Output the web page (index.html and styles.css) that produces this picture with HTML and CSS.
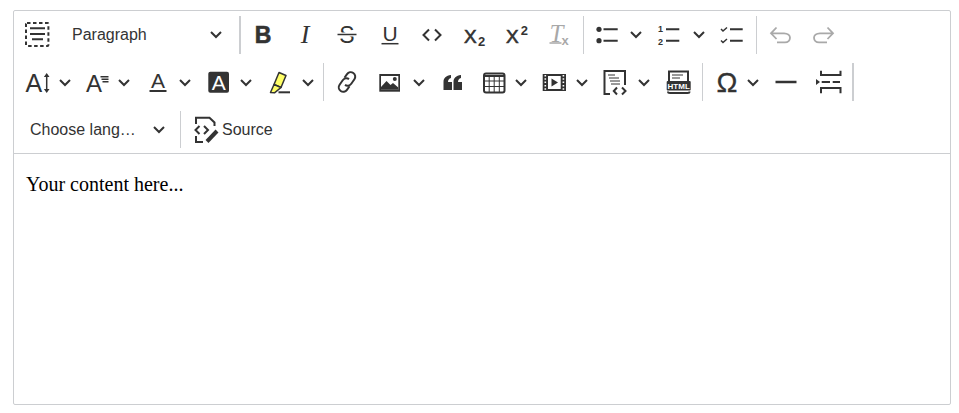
FILE: index.html
```html
<!DOCTYPE html>
<html lang="en">
<head>
<meta charset="utf-8">
<title>Editor</title>
<link rel="stylesheet" href="styles.css">
</head>
<body>
<div class="editor">
  <div class="toolbar">
    <div class="row">
      <svg class="ic g7" viewBox="0 0 32 32"><rect class="dash" x="5" y="4" width="22.4" height="23" rx="1"/><path class="ln" d="M9 9.300H24M9 15H24M11 20.300H22"/></svg>
      <div class="select para g19"><span>Paragraph</span><svg class="chev" viewBox="0 0 12 8"><path d="M1 1L6 6L11 1"/></svg></div>
      <i class="sep wide g17"></i>
      <svg class="ic g6" viewBox="0 0 32 32"><text class="sans bold mid fs23 heavy" x="16" y="24">B</text></svg>
      <svg class="ic g10" viewBox="0 0 32 32"><text class="serif ital mid fs26" x="16" y="24.300">I</text></svg>
      <svg class="ic g10" viewBox="0 0 32 32"><text class="sans mid fs23" x="16" y="24.400">S</text><path class="white-ln" d="M6.500 15.500H25.500"/><path class="thin" d="M6.500 15.500H25.500"/></svg>
      <svg class="ic g11" viewBox="0 0 32 32"><text class="sans mid fs21" x="16" y="21.500">U</text><path class="thin" d="M7.500 24.700H24.500"/></svg>
      <svg class="ic g10" viewBox="0 0 32 32"><path class="ln" d="M13 10.500L7.500 16L13 21.500M19 10.500L24.500 16L19 21.500"/></svg>
      <svg class="ic g10" viewBox="0 0 32 32"><text class="sans fs19 heavy" x="6" y="23.700">X</text><text class="sans bold fs13" x="20" y="27">2</text></svg>
      <svg class="ic g10" viewBox="0 0 32 32"><text class="sans fs19 heavy" x="6" y="23.700">X</text><text class="sans bold fs13" x="20.700" y="16">2</text></svg>
      <svg class="ic g10 off" viewBox="0 0 32 32"><text class="serif ital fs25" x="7.500" y="22.700">T</text><text class="sans bold fs13" x="19.500" y="25.500">x</text><path class="thin" d="M7.500 24H19.500"/></svg>
      <i class="sep g9"></i>
      <svg class="ic g7" viewBox="0 0 32 32"><circle class="dot" cx="8" cy="10.300" r="2.600"/><circle class="dot" cx="8" cy="21.700" r="2.600"/><path class="ln" d="M12.500 10.300H26.700M12.500 21.700H26.700"/></svg>
      <svg class="chev g7" viewBox="0 0 12 8"><path d="M1 1L6 6L11 1"/></svg>
      <svg class="ic g10" viewBox="0 0 32 32"><text class="sans bold fs9" x="6" y="13">1</text><text class="sans bold fs9" x="6" y="25.500">2</text><path class="ln" d="M14 10.300H27.300M14 21.700H27.300"/></svg>
      <svg class="chev g9" viewBox="0 0 12 8"><path d="M1 1L6 6L11 1"/></svg>
      <svg class="ic g10" viewBox="0 0 32 32"><path class="thin" d="M6 10L8 12L12 8.500M6 21.500L8 23.500L12 20"/><path class="ln" d="M15 10.300H27.700M15 21.700H27.700"/></svg>
      <i class="sep g9"></i>
      <svg class="ic g8 off" viewBox="0 0 32 32"><path class="thick-soft" d="M11.500 8.500L6 14.300L11.500 20M6 14.300H19C23 14.300 25 16.500 25 18.800C25 21.300 23 23.300 20 23.300H12"/></svg>
      <svg class="ic g10 off" viewBox="0 0 32 32"><path class="thick-soft" d="M20.500 8.500L26 14.300L20.500 20M26 14.300H13C9 14.300 7 16.500 7 18.800C7 21.300 9 23.300 12 23.300H20"/></svg>
    </div>
    <div class="row second">
      <svg class="ic g8" viewBox="0 0 32 32"><text class="sans fs25" x="3.500" y="25.700">A</text><path class="thin" d="M24.700 9V25"/><path class="fill" d="M24.700 7L27.500 11H21.900ZM24.700 27L27.500 23H21.900Z"/></svg>
      <svg class="chev g5" viewBox="0 0 12 8"><path d="M1 1L6 6L11 1"/></svg>
      <svg class="ic g10" viewBox="0 0 32 32"><text class="sans fs24" x="5" y="25.700">A</text><path class="thin" d="M19.500 10.700H27.500M20.500 13.200H27.500M21.500 15.700H27.500"/></svg>
      <svg class="chev g5" viewBox="0 0 12 8"><path d="M1 1L6 6L11 1"/></svg>
      <svg class="ic g12" viewBox="0 0 32 32"><text class="sans mid fs21" x="16" y="21.700">A</text><path class="ln" d="M7.500 25H24.500"/></svg>
      <svg class="chev g5" viewBox="0 0 12 8"><path d="M1 1L6 6L11 1"/></svg>
      <svg class="ic g12" viewBox="0 0 32 32"><rect class="fill" x="5.300" y="5.700" width="20.700" height="21" rx="2"/><text class="sans mid fs21 inv" x="15.700" y="23.500">A</text></svg>
      <svg class="chev g5" viewBox="0 0 12 8"><path d="M1 1L6 6L11 1"/></svg>
      <svg class="ic g11" viewBox="0 0 32 32"><path class="mark" d="M16 6.500L23 9.500L18 21.500L11 18.500Z"/><path class="mark" d="M11 18.500L7.500 26.500L11.500 26.800L18 21.500Z"/><path class="ln" d="M15.500 26.300H27"/></svg>
      <svg class="chev g7" viewBox="0 0 12 8"><path d="M1 1L6 6L11 1"/></svg>
      <i class="sep g9"></i>
      <svg class="ic g7" viewBox="0 0 32 32"><g transform="rotate(-55 16 16)"><path class="ln" d="M14 20.500H9.500A4.500 4.500 0 0 1 9.500 11.500H15A4.500 4.500 0 0 1 19.500 16"/><path class="ln" d="M18 11.500H22.500A4.500 4.500 0 0 1 22.500 20.500H17A4.500 4.500 0 0 1 12.500 16"/></g></svg>
      <svg class="ic g11" viewBox="0 0 32 32"><rect class="fill" x="5.300" y="8" width="20.700" height="17.700"/><rect class="white" x="7" y="10" width="17.300" height="13.700"/><path class="fill" d="M7 23.700V21L12.500 15L16.500 19L19 17L24.300 21.500V23.700Z"/><circle class="fill" cx="20.800" cy="13" r="2"/></svg>
      <svg class="chev g7" viewBox="0 0 12 8"><path d="M1 1L6 6L11 1"/></svg>
      <svg class="ic g12" viewBox="0 0 32 32"><path class="fill" d="M6.500 24V16C6.500 12 9 9.500 14 9V12C12 12.500 11 14 11 16H15V24ZM16.500 24V16C16.500 12 19 9.500 24 9V12C22 12.500 21 14 21 16H25V24Z"/></svg>
      <svg class="ic g9" viewBox="0 0 32 32"><rect class="ln" x="6" y="7.500" width="20.500" height="19" rx="2"/><path class="ln" d="M6 10H26.500"/><path class="hair" d="M6 15H26.500M6 20.500H26.500M11.200 10V26M16.200 10V26M21.300 10V26"/></svg>
      <svg class="chev g5" viewBox="0 0 12 8"><path d="M1 1L6 6L11 1"/></svg>
      <svg class="ic g11" viewBox="0 0 32 32"><rect class="fill" x="4.700" y="8" width="23.300" height="17"/><rect class="white" x="10" y="10" width="12.700" height="13"/><path class="fill" d="M13.500 12.500V20.500L20 16.500Z"/><path class="holes" d="M7.300 9V24.500M25.400 9V24.500"/></svg>
      <svg class="chev g6" viewBox="0 0 12 8"><path d="M1 1L6 6L11 1"/></svg>
      <svg class="ic g12" viewBox="0 0 32 32"><path class="ln" d="M10 28H4.500V5H25V19"/><path class="hair" d="M8 9H15M9 12H19M10 15H20M11 18H20"/><path class="ln" d="M17 21.500L13.800 25L17 28.500M22 21.500L25.500 25L22 28.500"/></svg>
      <svg class="chev g6" viewBox="0 0 12 8"><path d="M1 1L6 6L11 1"/></svg>
      <svg class="ic g13" viewBox="0 0 32 32"><path class="ln" d="M6 16V5.500H25V16"/><path class="hair" d="M9 9H20M9 12H17"/><rect class="fill" x="3.700" y="15" width="24" height="9.500" rx="1"/><text class="sans bold mid fs8 inv" x="15.700" y="22.700">HTML</text><path class="ln" d="M5 25.500C5 26.800 6 27 7 27H24.500C25.500 27 26.500 26.800 26.500 25.500"/></svg>
      <i class="sep g7"></i>
      <svg class="ic g8" viewBox="0 0 32 32"><text class="sans mid fs28 heavy-s" x="16" y="25.700">Ω</text></svg>
      <svg class="chev g4" viewBox="0 0 12 8"><path d="M1 1L6 6L11 1"/></svg>
      <svg class="ic g11" viewBox="0 0 32 32"><path class="mid-ln" d="M5.500 16H26.500"/></svg>
      <svg class="ic g11" viewBox="0 0 32 32"><path class="ln" d="M8 4.700V9H27.500V4.700M8 27.300V22H27.500V27.300"/><path class="fill" d="M3 13L7 16L3 19Z"/><path class="ln" d="M8.700 16H17M19.700 16H27"/></svg>
      <i class="sep wide g7"></i>
    </div>
    <div class="row third">
      <div class="select lang g16"><span>Choose lang…</span><svg class="chev" viewBox="0 0 12 8"><path d="M1 1L6 6L11 1"/></svg></div>
      <i class="sep g15"></i>
      <svg class="ic g9" viewBox="0 0 32 32"><path class="ln" d="M6 10V3.800H19.500L24.500 8.500V12M6 22V28H13"/><path class="ln" d="M9.500 12L5.500 16L9.500 20M14 12L18 16L14 20"/><path class="pen" d="M27 17L17 27.500"/></svg>
      <span class="label">Source</span>
    </div>
  </div>
  <div class="content">Your content here...</div>
</div>
</body>
</html>
```
FILE: styles.css
```css
* { box-sizing: border-box; }
html, body { margin: 0; padding: 0; background: #fff; }
body { padding: 10px 8px 8px 13px; }

.editor {
  width: 938px;
  height: 395px;
  border: 1px solid #ccced1;
  border-radius: 2px;
  display: flex;
  flex-direction: column;
  color: #333;
  font-family: "Liberation Sans", Arial, sans-serif;
}
.toolbar {
  display: flex;
  flex-direction: column;
  gap: 9px;
  height: 143px;
  padding-top: 5px;
  border-bottom: 1px solid #ccced1;
  flex: none;
}
.row { display: flex; align-items: center; height: 38px; flex: none; }
.third { margin-top: 1px; height: 37px; }
.content {
  flex: 1;
  padding: 18px 12px;
  color: #000;
  font: 20px/1.2 "Liberation Serif", "Times New Roman", serif;
}

.ic { width: 32px; height: 32px; flex: none; overflow: visible; }
.chev { width: 12px; height: 8px; flex: none; }
.chev path { fill: none; stroke: #333; stroke-width: 2; }
.second .chev { margin-top: 2px; }
.third .chev { margin-top: 1px; }
.sep { display: block; width: 1px; align-self: stretch; background: #ccced1; flex: none; }
.sep.wide { width: 2px; }

.select { display: flex; align-items: center; justify-content: space-between; font-size: 16px; flex: none; }
.para { width: 150px; }
.lang { width: 135px; }
.label { font-size: 16px; }

.off { opacity: .42; }

.g4 { margin-left: 4px; } .g5 { margin-left: 5px; } .g6 { margin-left: 6px; }
.g7 { margin-left: 7px; } .g8 { margin-left: 8px; } .g9 { margin-left: 9px; }
.g10 { margin-left: 10px; } .g11 { margin-left: 11px; } .g12 { margin-left: 12px; }
.g13 { margin-left: 13px; } .g15 { margin-left: 15px; } .g16 { margin-left: 16px; }
.g17 { margin-left: 17px; } .g19 { margin-left: 19px; }

.dash { fill: none; stroke: #333; stroke-width: 2; stroke-dasharray: 3.500 2.500; }
.ln { fill: none; stroke: #333; stroke-width: 2; }
.thin { fill: none; stroke: #333; stroke-width: 1.500; }
.hair { fill: none; stroke: #333; stroke-width: 1; }
.mid-ln { fill: none; stroke: #333; stroke-width: 2.500; }
.pen { fill: none; stroke: #333; stroke-width: 4; }
.thick-soft { fill: none; stroke: #333; stroke-width: 1.800; }
.white-ln { fill: none; stroke: #fff; stroke-width: 4; }
.holes { fill: none; stroke: #fff; stroke-width: 1.600; stroke-dasharray: 1.500 1.800; }
.dot, .fill { fill: #333; }
.white { fill: #fff; }
.mark { fill: #ffff66; stroke: #333; stroke-width: 1.500; stroke-linejoin: round; }

.sans { font-family: "Liberation Sans", Arial, sans-serif; fill: #333; }
.serif { font-family: "Liberation Serif", "Times New Roman", serif; fill: #333; }
.bold { font-weight: 700; }
.ital { font-style: italic; }
.mid { text-anchor: middle; }
.inv { fill: #fff; }
.heavy { stroke: #333; stroke-width: .6; }
.heavy-s { stroke: #333; stroke-width: .3; }
.fs8 { font-size: 8px; } .fs9 { font-size: 9px; } .fs13 { font-size: 13px; }
.fs19 { font-size: 19px; } .fs21 { font-size: 21px; }
.fs23 { font-size: 23px; } .fs24 { font-size: 24px; }
.fs25 { font-size: 25px; } .fs26 { font-size: 26px; } .fs28 { font-size: 28px; }
```
